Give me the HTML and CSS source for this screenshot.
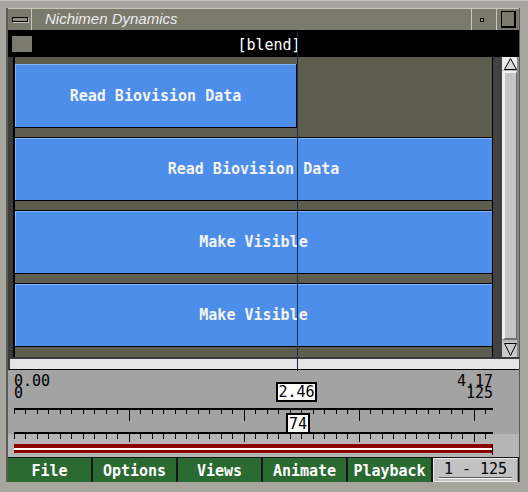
FILE: index.html
```html
<!DOCTYPE html>
<html>
<head>
<meta charset="utf-8">
<title>Nichimen Dynamics</title>
<link rel="stylesheet" href="styles.css">
</head>
<body>
<div class="win">
  <div class="inner">
    <div class="titlebar">
      <div class="tb-menu"><span class="tb-bar"></span></div>
      <div class="tb-title">Nichimen Dynamics</div>
      <div class="tb-dot"><span class="dot"></span></div>
      <div class="tb-max"><span class="maxbox"></span></div>
    </div>
    <div class="namebar"><span class="nb-sq"></span><span class="nb-text">[blend]</span></div>
    <div class="main">
      <div class="gl"></div>
      <div class="tracks">
        <div class="clip first">Read Biovision Data</div>
        <div class="clip">Read Biovision Data</div>
        <div class="clip">Make Visible</div>
        <div class="clip">Make Visible</div>
      </div>
      <div class="gr"></div>
      <div class="vscroll">
        <div class="vs-up"><svg width="15" height="13" viewBox="0 0 15 13"><path d="M7.5 1.5 L1.5 12.5 L13.5 12.5 Z" fill="#d8d8d8" stroke="#000" stroke-width="1"/></svg></div>
        <div class="vs-thumb"></div>
        <div class="vs-down"><svg width="15" height="15" viewBox="0 0 15 15"><path d="M1.5 1.5 L13.5 1.5 L7.5 13.5 Z" fill="#c8c8c8" stroke="#000" stroke-width="1"/></svg></div>
      </div>
    </div>
    <div class="hscroll"></div>
    <div class="panel">
      <div class="ptop">
        <div class="labels">
          <div class="lcol">0.00<br>0</div>
          <div class="rcol">4.17<br>125</div>
        </div>
        <svg class="ruler1" width="479" height="24" viewBox="0 0 479 24" shape-rendering="crispEdges">
          <rect x="0" y="0" width="479" height="2" fill="#000"/>
          <path stroke="#000" stroke-width="1" fill="none" d="M0.5 2v4M11.5 2v4M23.5 2v4M34.5 2v4M46.5 2v4M57.5 2v4M69.5 2v4M80.5 2v4M92.5 2v4M103.5 2v4M126.5 2v4M138.5 2v4M149.5 2v4M161.5 2v4M172.5 2v4M184.5 2v4M195.5 2v4M207.5 2v4M218.5 2v4M241.5 2v4M253.5 2v4M264.5 2v4M276.5 2v4M287.5 2v4M299.5 2v4M310.5 2v4M322.5 2v4M333.5 2v4M356.5 2v4M368.5 2v4M379.5 2v4M391.5 2v4M402.5 2v4M414.5 2v4M425.5 2v4M437.5 2v4M448.5 2v4M471.5 2v4M115.5 2v11M230.5 2v11M345.5 2v11M460.5 2v11"/>
        </svg>
        <div class="rline"></div>
        <div class="marker mtime" style="left:268px">2.46</div>
        <div class="marker mframe" style="left:278px">74</div>
      </div>
      <div class="pbot">
        <svg class="ruler2" width="479" height="9" viewBox="0 0 479 9" shape-rendering="crispEdges">
          <path stroke="#000" stroke-width="1" fill="none" d="M0.5 0v5M11.5 0v5M23.5 0v5M34.5 0v5M46.5 0v5M57.5 0v5M69.5 0v5M80.5 0v5M92.5 0v5M103.5 0v5M126.5 0v5M138.5 0v5M149.5 0v5M161.5 0v5M172.5 0v5M184.5 0v5M195.5 0v5M207.5 0v5M218.5 0v5M241.5 0v5M253.5 0v5M264.5 0v5M276.5 0v5M287.5 0v5M299.5 0v5M310.5 0v5M322.5 0v5M333.5 0v5M356.5 0v5M368.5 0v5M379.5 0v5M391.5 0v5M402.5 0v5M414.5 0v5M425.5 0v5M437.5 0v5M448.5 0v5M471.5 0v5M115.5 0v8M230.5 0v8M345.5 0v8M460.5 0v8"/>
        </svg>
        <div class="redbar"></div>
      </div>
    </div>
    <div class="btns">
      <div class="btn">File</div>
      <div class="btn">Options</div>
      <div class="btn">Views</div>
      <div class="btn">Animate</div>
      <div class="btn">Playback</div>
      <div class="range"><span class="range-text">1 - 125</span></div>
    </div>
  </div>
  <div class="playhead" style="left:297px"></div>
</div>
</body>
</html>
```

FILE: styles.css
```css
* { box-sizing: border-box; }
html, body { margin: 0; padding: 0; }
body {
  width: 528px;
  height: 492px;
  overflow: hidden;
  background: #a4a49c;
  font-family: "DejaVu Sans Mono", "Liberation Mono", monospace;
}
.win {
  position: relative;
  width: 528px;
  height: 492px;
  padding: 8px 9px 10px 8px;
  background: #a6a69e;
  border-top: 1px solid #c4c4bc;
}
.inner {
  display: flex;
  flex-direction: column;
  height: 474px;
  margin-top: -1px;
  box-shadow: -2px 0 0 #5a5a52, 1px 0 0 #5a5a52;
}

/* title bar */
.titlebar {
  height: 22px;
  display: flex;
  background: #7a7a6c;
  border-top: 1px solid #c8c8b8;
}
.tb-menu {
  width: 24px;
  border-right: 1px solid #c8c8b8;
  display: flex;
  align-items: center;
  padding-left: 4px;
}
.tb-bar {
  display: block;
  width: 16px;
  height: 5px;
  border: 1px solid #000;
  background: #8e8e80;
  box-shadow: 1px 1px 0 #c4c4b4;
}
.tb-title {
  flex: 1;
  padding-left: 13px;
  font-family: "Liberation Sans", Arial, sans-serif;
  font-style: italic;
  font-size: 15px;
  line-height: 19px;
  color: #ececec;
}
.tb-dot {
  width: 25px;
  border-left: 1px solid #c8c8b8;
  display: flex;
  align-items: center;
  padding-left: 8px;
}
.dot {
  display: block;
  width: 4px;
  height: 4px;
  border: 1px solid #000;
  background: #9a9a8a;
}
.tb-max {
  width: 23px;
  border-left: 1px solid #c8c8b8;
  padding: 2px 0 0 4px;
}
.maxbox {
  display: block;
  width: 15px;
  height: 17px;
  border: 1px solid #000;
  border-right-width: 2px;
  border-bottom-width: 2px;
}

/* name bar */
.namebar {
  height: 27px;
  display: flex;
  align-items: center;
  background: #000;
}
.nb-sq {
  display: block;
  width: 20px;
  height: 16px;
  margin-left: 4px;
  background: #7a7a6e;
}
.nb-text {
  flex: 1;
  align-self: stretch;
  text-align: center;
  padding: 3px 13px 0 0;
  font-size: 15px;
  line-height: 24px;
  color: #fff;
}

/* tracks */
.main {
  height: 300px;
  display: flex;
}
.gl {
  width: 7px;
  background: #3c3c3a;
  border-right: 2px solid #000;
}
.tracks {
  flex: 1;
  display: flex;
  flex-direction: column;
  gap: 9px;
  padding-top: 7px;
  background: #5e5e50;
  border-right: 1px solid #000;
}
.clip {
  height: 64px;
  display: flex;
  align-items: center;
  justify-content: center;
  background: #4c8eea;
  border-top: 1px solid #000;
  border-bottom: 1px solid #000;
  box-shadow: inset 1px 1px 0 #80b8ff;
  color: #f4f4f4;
  font-weight: bold;
  font-size: 15px;
}
.clip.first {
  width: 282px;
  border-top: 0;
  border-right: 1px solid #000;
}
.gr {
  width: 9px;
  background: #424240;
}
.vscroll {
  width: 17px;
  display: flex;
  flex-direction: column;
  background: #b8b8b8;
  border-right: 2px solid #8a8a8a;
}
.vs-up {
  height: 13px;
  background: #ececec;
  padding-left: 1px;
}
.vs-up svg, .vs-down svg { display: block; }
.vs-thumb {
  flex: 1;
  margin: 1px 0 2px 0;
  background: #c6c6c6;
  border-left: 3px solid #f2f2f2;
  border-top: 2px solid #f2f2f2;
  border-right: 1px solid #6e6e6e;
  border-bottom: 2px solid #6e6e6e;
}
.vs-down {
  height: 15px;
  background: #cacaca;
  padding-left: 1px;
}

.hscroll {
  height: 13px;
  background: #e4e4e4;
  border-top: 2px solid #3a3a38;
  border-left: 2px solid #3a3a38;
  border-bottom: 1px solid #000;
}

/* time panel */
.panel { height: 87px; }
.ptop {
  position: relative;
  height: 64px;
  padding: 0 26px 0 6px;
  background: #a3a3a3;
}
.labels {
  height: 38px;
  display: flex;
  justify-content: space-between;
  padding-top: 5px;
  font-size: 15px;
  line-height: 12px;
  color: #000;
}
.rcol { text-align: right; }
.ruler1 { display: block; }
.rline {
  width: 479px;
  height: 2px;
  background: #000;
}
.marker {
  position: absolute;
  background: #fff;
  border: 2px solid #000;
  text-align: center;
  font-size: 15px;
  line-height: 15px;
  color: #000;
}
.mtime {
  top: 12px;
  width: 41px;
  height: 20px;
  padding-top: 1px;
}
.mframe {
  top: 43px;
  width: 24px;
  height: 21px;
  padding-top: 2px;
}
.pbot {
  height: 23px;
  padding: 0 26px 0 6px;
  background: #b5b5b5;
}
.ruler2 { display: block; }
.redbar {
  position: relative;
  width: 479px;
  height: 9px;
  margin-top: 1px;
  background: linear-gradient(#8c0000 0 4px, #ffffff 4px 6px, #8c0000 6px 9px);
}
.redbar::after {
  content: "";
  position: absolute;
  right: 0;
  top: 1px;
  width: 1px;
  height: 10px;
  background: #2a0000;
}

/* buttons */
.btns {
  height: 25px;
  display: flex;
  gap: 2px;
  padding: 1px 1px 0 0;
  background: #161616;
}
.btn {
  flex: 1;
  height: 24px;
  padding-top: 3px;
  background: #2b6a31;
  color: #fff;
  font-weight: bold;
  font-size: 15px;
  line-height: 21px;
  text-align: center;
}
.range {
  width: 85px;
  height: 24px;
  background: #c2c2c2;
  border: 1px solid #ececec;
  border-right-color: #8a8a8a;
  padding: 0 5px;
}
.range-text {
  display: block;
  padding-top: 2px;
  font-size: 15px;
  line-height: 16px;
  text-align: center;
  color: #000;
  border-bottom: 1px solid #5a5a5a;
  box-shadow: 0 1px 0 #ffffff;
}

.playhead {
  position: absolute;
  top: 30px;
  width: 1px;
  height: 340px;
  background: #1a2c44;
}
```
